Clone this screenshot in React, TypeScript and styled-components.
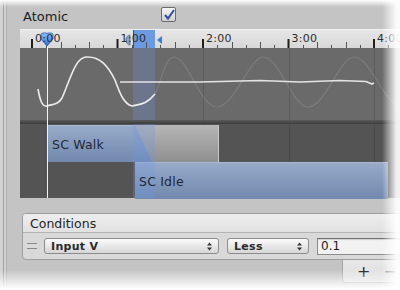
import React from "react";
import styled, { createGlobalStyle } from "styled-components";

const GlobalStyle = createGlobalStyle`
  html, body { margin: 0; padding: 0; background: #ffffff; }
  body { font-family: "DejaVu Sans", "Liberation Sans", sans-serif; }
`;

// timeline geometry, page pixels
const TL_X = 20;
const SEC = 85.5;
const ZERO = 32;

const majors = [0, 1, 2, 3, 4];

const Window = styled.div`
  position: relative;
  width: 400px;
  height: 290px;
  overflow: hidden;
  display: flex;
  background: #c4c4c4;
`;

const LeftEdge = styled.div`
  flex: none;
  width: 8px;
  background: linear-gradient(
    to right,
    #d2d2d2 0 3px,
    #a2a2a2 3px 4px,
    #d0d0d0 4px 6px,
    #b2b2b2 6px 7px,
    #c4c4c4 7px
  );
`;

const Main = styled.div`
  flex: 1;
  min-width: 0;
  display: flex;
  flex-direction: column;
`;

const HeaderRow = styled.div`
  height: 29px;
  display: flex;
  align-items: center;
  padding: 4px 0 0 15px;
  box-sizing: border-box;
`;

const Label = styled.span`
  width: 138px;
  font-size: 13px;
  color: #1c1c1c;
`;

const Checkbox = styled.span`
  width: 13px;
  height: 13px;
  border: 1px solid #6c6c6c;
  border-radius: 2px;
  background: linear-gradient(#f6f6f6, #cfcfcf);
  display: flex;
  align-items: center;
  justify-content: center;
  margin-top: -4px;
`;

const Timeline = styled.div`
  position: relative;
  margin-left: 12px;
  height: 169px;
  display: flex;
  flex-direction: column;
`;

const Ruler = styled.div`
  position: relative;
  height: 19px;
  background: linear-gradient(#e6e6e6, #d8d8d8);
  border-top: 1px solid #f0f0f0;
  box-sizing: border-box;
`;

const RulerHighlight = styled.div<{ $left: number; $width: number }>`
  position: absolute;
  top: 0;
  bottom: 0;
  left: ${(p) => p.$left}px;
  width: ${(p) => p.$width}px;
  background: #6b9ae0;
  border-left: 1px solid #2a4f8a;
  box-sizing: border-box;
`;

const TickLabel = styled.span<{ $left: number }>`
  position: absolute;
  top: 2px;
  left: ${(p) => p.$left}px;
  font-size: 11px;
  line-height: 13px;
  color: #2c2c2c;
  letter-spacing: 0.3px;
  white-space: nowrap;
`;

const DrawLayer = styled.svg`
  position: absolute;
  left: 0;
  top: 0;
  overflow: visible;
`;

const CurveArea = styled.div`
  position: relative;
  height: 72px;
  background: #6a6a6a;
`;

const Separator = styled.div`
  height: 4px;
  background: linear-gradient(#5a5a5a, #3c3c3c);
`;

const TrackArea = styled.div`
  position: relative;
  height: 74px;
  background: #545454;
`;

const GridLine = styled.div<{ $left: number }>`
  position: absolute;
  top: 0;
  bottom: 0;
  left: ${(p) => p.$left}px;
  width: 1px;
  background: rgba(0, 0, 0, 0.13);
`;

const Bar = styled.div<{ $left: number; $top: number; $width: number }>`
  position: absolute;
  left: ${(p) => p.$left}px;
  top: ${(p) => p.$top}px;
  width: ${(p) => p.$width}px;
  height: 37px;
  box-sizing: border-box;
  background: linear-gradient(#97aac8, #7189ae);
  border-top: 1px solid #a9b9d2;
  display: flex;
  align-items: center;
  padding-left: 4px;
  font-size: 12.5px;
  color: #1e2838;
  letter-spacing: 0.2px;
`;

const WalkBar = styled(Bar)`
  &::after {
    content: "";
    position: absolute;
    inset: -1px 0 0 0;
    background: linear-gradient(#b6b6b6, #8f8f8f);
    border-right: 1px solid #c8c8c8;
    clip-path: polygon(87px 0, 100% 0, 100% 100%, 104px 100%);
  }
`;

const BarText = styled.span`
  position: relative;
  z-index: 1;
`;

const TransitionShade = styled.div<{ $left: number; $width: number }>`
  position: absolute;
  top: 0;
  bottom: 0;
  left: ${(p) => p.$left}px;
  width: ${(p) => p.$width}px;
  background: rgba(110, 150, 230, 0.28);
`;

const Playhead = styled.div<{ $left: number }>`
  position: absolute;
  left: ${(p) => p.$left}px;
  top: 17px;
  bottom: 0;
  width: 1px;
  background: #f4f4f4;
`;

const Panel = styled.div`
  margin: 15px -12px 0 14px;
  border: 1px solid #9e9e9e;
  border-radius: 4px;
  overflow: hidden;
  background: #d9d9d9;
`;

const PanelHeader = styled.div`
  height: 18px;
  padding-left: 7px;
  display: flex;
  align-items: center;
  background: linear-gradient(#eeeeee, #e1e1e1);
  border-bottom: 1px solid #b4b4b4;
  font-size: 12.5px;
  color: #1f1f1f;
`;

const ConditionRow = styled.div`
  height: 26px;
  display: flex;
  align-items: center;
  gap: 8px;
  padding-left: 4px;
`;

const Handle = styled.span`
  width: 10px;
  height: 4px;
  border-top: 1px solid #8a8a8a;
  border-bottom: 1px solid #8a8a8a;
  margin-right: -1px;
`;

const Popup = styled.div<{ $width: number }>`
  width: ${(p) => p.$width}px;
  height: 16px;
  box-sizing: border-box;
  border: 1px solid #8c8c8c;
  border-radius: 3px;
  background: linear-gradient(#fbfbfb, #d6d6d6);
  display: flex;
  align-items: center;
  justify-content: space-between;
  padding: 0 6px 0 6px;
  font-size: 11px;
  font-weight: bold;
  color: #2a2a2a;
  letter-spacing: 0.3px;
`;

const Arrows = styled.span`
  display: flex;
  flex-direction: column;
  gap: 1px;
`;

const TextField = styled.div`
  flex: 1;
  height: 17px;
  box-sizing: border-box;
  border: 1px solid #8c8c8c;
  border-top-color: #6e6e6e;
  background: #f2f2f2;
  box-shadow: inset 0 1px 1px rgba(0, 0, 0, 0.15);
  display: flex;
  align-items: center;
  padding-left: 3px;
  font-size: 12px;
  color: #1e1e1e;
`;

const FooterRow = styled.div`
  display: flex;
  justify-content: flex-end;
`;

const Footer = styled.div`
  width: 58px;
  height: 23px;
  display: flex;
  align-items: center;
  gap: 13px;
  padding-left: 14px;
  box-sizing: border-box;
  background: linear-gradient(#e8e8e8, #dcdcdc);
  border: 1px solid #a8a8a8;
  border-top: none;
  border-right: none;
  border-radius: 0 0 0 4px;
  font-size: 16px;
  color: #222;
`;

const Minus = styled.span`
  color: #8a8a8a;
`;

const FadeRight = styled.div`
  position: absolute;
  top: 0;
  right: 0;
  bottom: 0;
  width: 18px;
  background: linear-gradient(to right, rgba(255, 255, 255, 0), rgba(255, 255, 255, 0.92) 80%);
`;

const FadeBottom = styled.div`
  position: absolute;
  left: 0;
  right: 0;
  bottom: 0;
  height: 20px;
  background: linear-gradient(rgba(255, 255, 255, 0), #ffffff 95%);
`;

const FadeTop = styled.div`
  position: absolute;
  left: 0;
  right: 0;
  top: 0;
  height: 7px;
  background: linear-gradient(#ffffff, rgba(255, 255, 255, 0));
`;

const x = (page: number) => page - TL_X;

const RulerTicks = () => {
  const lines: React.ReactNode[] = [];
  majors.forEach((m) => {
    const base = ZERO + m * SEC;
    lines.push(<rect key={`M${m}`} x={x(base) - 1} y={9} width={2} height={9} fill="#1e1e1e" />);
    for (let i = 1; i < 6; i++) {
      const px = Math.round(x(base + (i * SEC) / 6));
      const h = i % 2 === 0 ? 6 : 3;
      lines.push(<rect key={`m${m}-${i}`} x={px} y={18 - h} width={1} height={h} fill="#555" />);
    }
  });
  return (
    <DrawLayer width={380} height={19}>
      {lines}
      {/* transition start marker */}
      <path d="M110 5 a4 5 0 1 0 0 10 z" fill="#8da2c4" stroke="#55698c" strokeWidth={0.8} />
      {/* transition end marker */}
      <path d="M137 10 L142 6 L142 14 Z" fill="#3f79d8" />
      <defs>
        <linearGradient id="ph" x1="0" y1="0" x2="0" y2="1">
          <stop offset="0" stopColor="#8cc0f6" />
          <stop offset="1" stopColor="#2e6cd0" />
        </linearGradient>
      </defs>
      {/* playhead head */}
      <path
        d="M21 5 Q21 3 23 3 L26 3 Q27 3 27 4 Q27 3 28 3 L31 3 Q33 3 33 5 L33 9 L27 16 L21 9 Z"
        fill="url(#ph)"
        stroke="#275aa8"
        strokeWidth={0.8}
      />
    </DrawLayer>
  );
};

const Curves = () => (
  <DrawLayer width={380} height={72} viewBox="20 48 380 72">
    <path
      d="M155 94 C162 80 165 57 174 57 C188 57 200 107 217 107 C234 107 250 57 263 57 C280 57 292 107 308 107 C325 107 340 57 354 57 C370 57 382 100 400 107"
      fill="none"
      stroke="rgba(255,255,255,0.13)"
      strokeWidth={1.2}
    />
    <path
      d="M120 82 L200 82 L260 80.5 L300 82 L340 80.5 L366 81.5 L372 84 L374 83"
      fill="none"
      stroke="#e4e4e4"
      strokeWidth={1.6}
    />
    <path
      d="M38 89 C40 100 42 107 47 106 C53 104 58 105 62 98 C70 80 75 58 86 57 C100 56 108 66 115 80 C120 94 124 104 132 106 C140 104 146 105 155 94"
      fill="none"
      stroke="#ececec"
      strokeWidth={1.6}
    />
  </DrawLayer>
);

const UpDown = () => (
  <Arrows>
    <svg width="5" height="9" viewBox="0 0 5 9">
      <path d="M0 3.5 L2.5 0.5 L5 3.5 Z M0 5.5 L2.5 8.5 L5 5.5 Z" fill="#333" />
    </svg>
  </Arrows>
);

export default function App() {
  const trLeft = x(133);
  const trWidth = 22;
  return (
    <>
      <GlobalStyle />
      <Window>
        <LeftEdge />
        <Main>
          <HeaderRow>
            <Label>Atomic</Label>
            <Checkbox>
              <svg width="12" height="12" viewBox="0 0 12 12">
                <path d="M2 6 L5 9.5 L11 1" fill="none" stroke="#2b4f9c" strokeWidth={2} />
              </svg>
            </Checkbox>
          </HeaderRow>

          <Timeline>
            <Ruler>
              <RulerHighlight $left={trLeft} $width={trWidth} />
              <RulerTicks />
              {majors.map((m) => (
                <TickLabel key={m} $left={x(ZERO + m * SEC) + 3}>
                  {m}:00
                </TickLabel>
              ))}
            </Ruler>
            <CurveArea>
              {majors.slice(2).map((m) => (
                <GridLine key={m} $left={x(ZERO + m * SEC)} />
              ))}
              <TransitionShade $left={trLeft} $width={trWidth} />
              <Curves />
            </CurveArea>
            <Separator />
            <TrackArea>
              {majors.slice(2).map((m) => (
                <GridLine key={m} $left={x(ZERO + m * SEC)} />
              ))}
              <WalkBar $left={x(48)} $top={1} $width={171}>
                <BarText>SC Walk</BarText>
              </WalkBar>
              <Bar $left={x(135)} $top={38} $width={253}>
                <BarText>SC Idle</BarText>
              </Bar>
              <TransitionShade $left={trLeft} $width={trWidth} />
            </TrackArea>
            <Playhead $left={x(47)} />
          </Timeline>

          <Panel>
            <PanelHeader>Conditions</PanelHeader>
            <ConditionRow>
              <Handle />
              <Popup $width={175}>
                Input V
                <UpDown />
              </Popup>
              <Popup $width={82}>
                Less
                <UpDown />
              </Popup>
              <TextField>0.1</TextField>
            </ConditionRow>
          </Panel>
          <FooterRow>
            <Footer>
              <span>+</span>
              <Minus>−</Minus>
            </Footer>
          </FooterRow>
        </Main>
        <FadeTop />
        <FadeRight />
        <FadeBottom />
      </Window>
    </>
  );
}
